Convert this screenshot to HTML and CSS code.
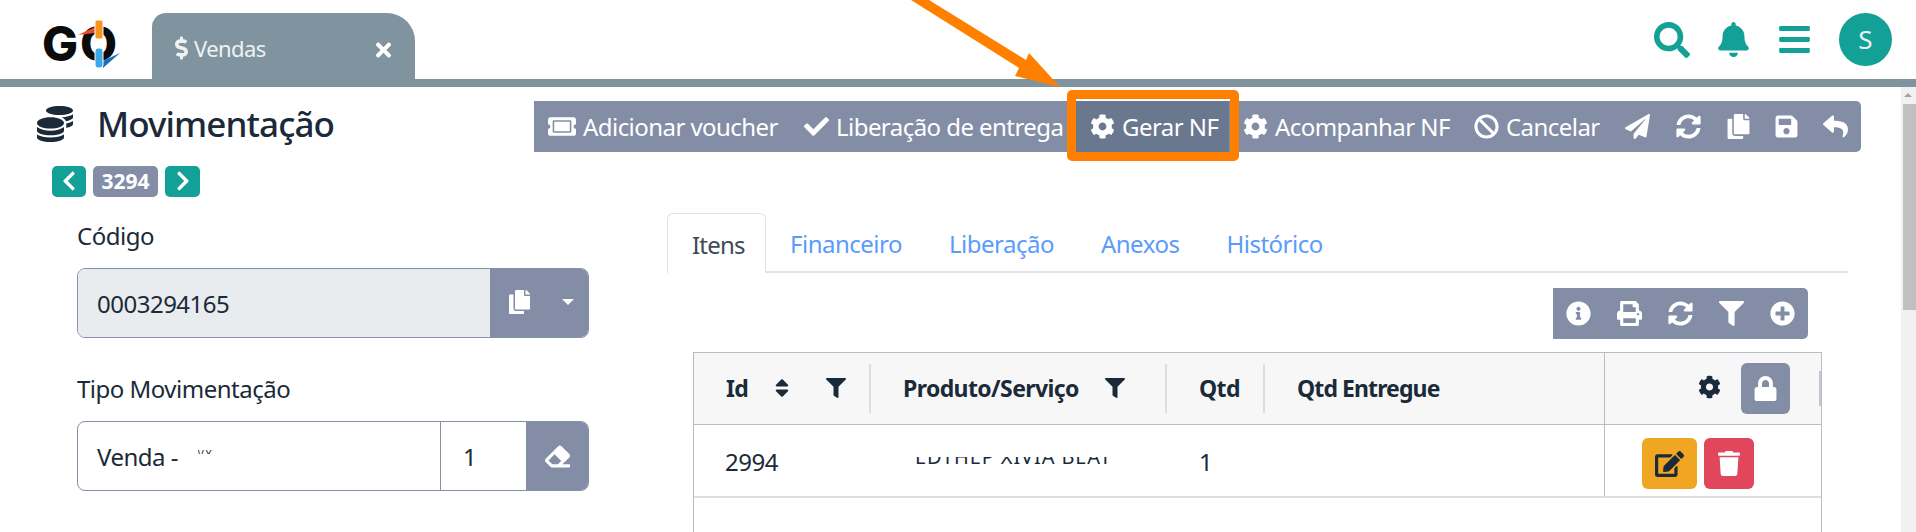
FILE: index.html
```html
<!DOCTYPE html>
<html lang="pt-BR">
<head>
    <meta charset="UTF-8">
    <title>Movimentação</title>
    <link rel="stylesheet" href="styles.css">
</head>
<body>

    <!-- Icon set -->
    <svg class="icon-defs" xmlns="http://www.w3.org/2000/svg">
        <symbol id="i-search" viewBox="0 0 512 512"><path d="M505 442.7L405.3 343c-4.5-4.5-10.6-7-17-7H372c27.6-35.3 44-79.7 44-128C416 93.1 322.9 0 208 0S0 93.1 0 208s93.1 208 208 208c48.3 0 92.7-16.4 128-44v16.3c0 6.4 2.5 12.5 7 17l99.7 99.7c9.4 9.4 24.6 9.4 33.9 0l28.3-28.3c9.4-9.4 9.4-24.6.1-34zM208 336c-70.7 0-128-57.2-128-128 0-70.7 57.2-128 128-128 70.7 0 128 57.2 128 128 0 70.7-57.2 128-128 128z"/></symbol>
        <symbol id="i-bell" viewBox="0 0 448 512"><path d="M224 512c35.32 0 63.97-28.65 63.97-64H160.03c0 35.35 28.65 64 63.97 64zm215.39-149.71c-19.32-20.76-55.47-51.99-55.47-154.29 0-77.7-54.48-139.9-127.94-155.16V32c0-17.67-14.32-32-31.98-32s-31.98 14.33-31.98 32v20.84C118.56 68.1 64.08 130.3 64.08 208c0 102.3-36.15 133.53-55.47 154.29-6 6.45-8.66 14.16-8.61 21.71.11 16.4 12.98 32 32.1 32h383.8c19.12 0 32-15.6 32.1-32 .05-7.55-2.61-15.27-8.61-21.71z"/></symbol>
        <symbol id="i-bars" viewBox="0 0 448 512"><path d="M16 132h416c8.837 0 16-7.163 16-16V76c0-8.837-7.163-16-16-16H16C7.163 60 0 67.163 0 76v40c0 8.837 7.163 16 16 16zm0 160h416c8.837 0 16-7.163 16-16v-40c0-8.837-7.163-16-16-16H16c-8.837 0-16 7.163-16 16v40c0 8.837 7.163 16 16 16zm0 160h416c8.837 0 16-7.163 16-16v-40c0-8.837-7.163-16-16-16H16c-8.837 0-16 7.163-16 16v40c0 8.837 7.163 16 16 16z"/></symbol>
        <symbol id="i-cog" viewBox="0 0 512 512"><path d="M487.4 315.7l-42.6-24.6c4.3-23.2 4.3-47 0-70.2l42.6-24.6c4.9-2.8 7.1-8.6 5.5-14-11.1-35.6-30-67.8-54.7-94.6-3.8-4.1-10-5.1-14.8-2.3L380.8 110c-17.9-15.4-38.5-27.3-60.8-35.1V25.8c0-5.6-3.9-10.5-9.4-11.7-36.7-8.2-74.3-7.8-109.2 0-5.5 1.2-9.4 6.1-9.4 11.7V75c-22.2 7.9-42.8 19.8-60.8 35.1L88.7 85.5c-4.9-2.8-11-1.9-14.8 2.3-24.7 26.7-43.6 58.9-54.7 94.6-1.7 5.4.6 11.2 5.5 14L67.3 221c-4.3 23.2-4.3 47 0 70.2l-42.6 24.6c-4.9 2.8-7.1 8.6-5.5 14 11.1 35.6 30 67.8 54.7 94.6 3.8 4.1 10 5.1 14.8 2.3l42.6-24.6c17.9 15.4 38.5 27.3 60.8 35.1v49.2c0 5.6 3.9 10.5 9.4 11.7 36.7 8.2 74.3 7.8 109.2 0 5.5-1.2 9.4-6.1 9.4-11.7v-49.2c22.2-7.9 42.8-19.8 60.8-35.1l42.6 24.6c4.9 2.8 11 1.9 14.8-2.3 24.7-26.7 43.6-58.9 54.7-94.6 1.5-5.5-.7-11.3-5.6-14.1zM256 336c-44.1 0-80-35.9-80-80s35.9-80 80-80 80 35.9 80 80-35.9 80-80 80z"/></symbol>
        <symbol id="i-check" viewBox="0 0 512 512"><path d="M173.898 439.404l-166.4-166.4c-9.997-9.997-9.997-26.206 0-36.204l36.203-36.204c9.997-9.998 26.207-9.998 36.204 0L192 312.69 432.095 72.596c9.997-9.997 26.207-9.997 36.204 0l36.203 36.204c9.997 9.997 9.997 26.206 0 36.204l-294.4 294.401c-9.998 9.997-26.207 9.997-36.204-.001z"/></symbol>
        <symbol id="i-ban" viewBox="0 0 512 512"><path d="M256 8C119.034 8 8 119.033 8 256s111.034 248 248 248 248-111.034 248-248S392.967 8 256 8zm130.108 117.892c65.448 65.448 70 165.481 20.677 235.637L150.47 105.216c70.204-49.356 170.226-44.735 235.638 20.676zM125.892 386.108c-65.448-65.448-70-165.481-20.677-235.637L361.53 406.784c-70.203 49.356-170.226 44.736-235.638-20.676z"/></symbol>
        <symbol id="i-plane" viewBox="0 0 512 512"><path d="M476 3.2L12.5 270.6c-18.1 10.4-15.8 35.6 2.2 43.2L121 358.4l287.3-253.2c5.5-4.9 13.3 2.6 8.6 8.3L176 407v80.5c0 23.6 28.5 32.9 42.5 15.8L282 426l124.6 52.2c14.2 6 30.4-2.9 33-18.2l72-432C515 7.8 493.3-6.8 476 3.2z"/></symbol>
        <symbol id="i-sync" viewBox="0 0 512 512"><path d="M370.72 133.28C339.458 104.008 298.888 87.962 255.848 88c-77.458.068-144.328 53.178-162.791 126.85-1.344 5.363-6.122 9.15-11.651 9.15H24.103c-7.498 0-13.194-6.807-11.807-14.176C33.933 94.924 134.813 8 256 8c66.448 0 126.791 26.136 171.315 68.685L463.03 40.97C478.149 25.851 504 36.559 504 57.941V192c0 13.255-10.745 24-24 24H345.941c-21.382 0-32.09-25.851-16.971-40.971l41.75-41.749zM32 296h134.059c21.382 0 32.09 25.851 16.971 40.971l-41.75 41.75c31.262 29.273 71.835 45.319 114.876 45.28 77.418-.07 144.315-53.144 162.787-126.849 1.344-5.363 6.122-9.15 11.651-9.15h57.304c7.498 0 13.194 6.807 11.807 14.176C478.067 417.076 377.187 504 256 504c-66.448 0-126.791-26.136-171.315-68.685L48.97 471.03C33.851 486.149 8 475.441 8 454.059V320c0-13.255 10.745-24 24-24z"/></symbol>
        <symbol id="i-copy" viewBox="0 0 448 512"><path d="M320 448v40c0 13.255-10.745 24-24 24H24c-13.255 0-24-10.745-24-24V120c0-13.255 10.745-24 24-24h72v296c0 30.879 25.121 56 56 56h168zm0-344V0H152c-13.255 0-24 10.745-24 24v368c0 13.255 10.745 24 24 24h272c13.255 0 24-10.745 24-24V128H344c-13.2 0-24-10.8-24-24zm120.971-31.029L375.029 7.029A24 24 0 0 0 358.059 0H352v96h96v-6.059a24 24 0 0 0-7.029-16.97z"/></symbol>
        <symbol id="i-save" viewBox="0 0 448 512"><path d="M433.941 129.941l-83.882-83.882A48 48 0 0 0 316.118 32H48C21.49 32 0 53.49 0 80v352c0 26.51 21.49 48 48 48h352c26.51 0 48-21.49 48-48V163.882a48 48 0 0 0-14.059-33.941zM224 416c-35.346 0-64-28.654-64-64 0-35.346 28.654-64 64-64s64 28.654 64 64c0 35.346-28.654 64-64 64zm96-304.52V212c0 6.627-5.373 12-12 12H76c-6.627 0-12-5.373-12-12V108c0-6.627 5.373-12 12-12h228.52c3.183 0 6.235 1.264 8.485 3.515l3.48 3.48A11.996 11.996 0 0 1 320 111.48z"/></symbol>
        <symbol id="i-reply" viewBox="0 0 512 512"><path d="M8.309 189.836L184.313 37.851C199.719 24.546 224 35.347 224 56.015v80.053c160.629 1.839 288 34.032 288 186.258 0 61.441-39.581 122.309-83.333 154.132-13.653 9.931-33.111-2.533-28.077-18.631 45.344-145.012-21.507-183.51-176.59-185.742V360c0 20.7-24.3 31.453-39.687 18.164l-176.004-152c-11.071-9.562-11.086-26.753 0-36.328z"/></symbol>
        <symbol id="i-ticket" viewBox="0 0 576 512"><path d="M128 160h320v192H128V160zm400 96c0 26.51 21.49 48 48 48v96c0 26.51-21.49 48-48 48H48c-26.51 0-48-21.49-48-48v-96c26.51 0 48-21.49 48-48s-21.49-48-48-48v-96c0-26.51 21.49-48 48-48h480c26.51 0 48 21.49 48 48v96c-26.51 0-48 21.49-48 48zm-48-104c0-13.255-10.745-24-24-24H120c-13.255 0-24 10.745-24 24v208c0 13.255 10.745 24 24 24h336c13.255 0 24-10.745 24-24V152z"/></symbol>
        <symbol id="i-coins" viewBox="0 0 512 512"><path d="M0 405.3V448c0 35.3 86 64 192 64s192-28.7 192-64v-42.7C342.7 434.4 267.2 448 192 448S41.3 434.4 0 405.3zM320 128c106 0 192-28.7 192-64S426 0 320 0 128 28.7 128 64s86 64 192 64zM0 300.4V352c0 35.3 86 64 192 64s192-28.7 192-64v-51.6c-41.3 34-116.9 51.6-192 51.6S41.3 334.4 0 300.4zm416 11c57.3-11.1 96-31.7 96-55.4v-42.7c-23.2 16.4-57.3 27.6-96 34.5v63.6zM192 160C86 160 0 195.8 0 240s86 80 192 80 192-35.8 192-80-86-80-192-80zm219.3 56.3c60-10.8 100.7-32 100.7-56.3v-42.7c-35.5 25.1-96.5 38.6-160.7 41.8 29.5 14.3 51.2 33.5 60 57.2z"/></symbol>
        <symbol id="i-dollar" viewBox="0 0 288 512"><path d="M209.2 233.4l-108-31.6C88.7 198.2 80 186.5 80 173.5c0-16.3 13.2-29.5 29.5-29.5h66.3c12.2 0 24.2 3.7 34.2 10.5 6.1 4.1 14.3 3.1 19.5-2l34.8-34c7.1-6.9 6.1-18.4-1.8-24.5C238 74.8 207.4 64.1 176 64V16c0-8.8-7.2-16-16-16h-32c-8.8 0-16 7.2-16 16v48h-2.5C45.8 64-5.4 118.7.5 183.6c4.2 46.1 39.4 83.6 83.8 96.6l102.5 30c12.5 3.7 21.2 15.3 21.2 28.3 0 16.3-13.2 29.5-29.5 29.5h-66.3C100 368 88 364.3 78 357.5c-6.1-4.1-14.3-3.1-19.5 2l-34.8 34c-7.1 6.9-6.1 18.4 1.8 24.5 24.5 19.2 55.1 29.9 86.5 30v48c0 8.8 7.2 16 16 16h32c8.8 0 16-7.2 16-16v-48.2c46.6-.9 90.3-28.6 105.7-72.7 21.5-61.6-14.6-124.8-72.5-141.7z"/></symbol>
        <symbol id="i-times" viewBox="0 0 352 512"><path d="M242.72 256l100.07-100.07c12.28-12.28 12.28-32.19 0-44.48l-22.24-22.24c-12.28-12.28-32.19-12.28-44.48 0L176 189.28 75.93 89.21c-12.28-12.28-32.19-12.28-44.48 0L9.21 111.45c-12.28 12.28-12.28 32.19 0 44.48L109.28 256 9.21 356.07c-12.28 12.28-12.28 32.19 0 44.48l22.24 22.24c12.28 12.28 32.2 12.28 44.48 0L176 322.72l100.07 100.07c12.28 12.28 32.2 12.28 44.48 0l22.24-22.24c12.28-12.28 12.28-32.19 0-44.48L242.72 256z"/></symbol>
        <symbol id="i-left" viewBox="0 0 320 512"><path d="M34.52 239.03L228.87 44.69c9.37-9.37 24.57-9.37 33.94 0l22.67 22.67c9.36 9.36 9.37 24.52.04 33.9L131.49 256l154.02 154.75c9.34 9.38 9.32 24.54-.04 33.9l-22.67 22.67c-9.37 9.37-24.57 9.37-33.94 0L34.52 272.97c-9.37-9.37-9.37-24.57 0-33.94z"/></symbol>
        <symbol id="i-right" viewBox="0 0 320 512"><path d="M285.476 272.971L91.132 467.314c-9.373 9.373-24.569 9.373-33.941 0l-22.667-22.667c-9.357-9.357-9.375-24.522-.04-33.901L188.505 256 34.484 101.255c-9.335-9.379-9.317-24.544.04-33.901l22.667-22.667c9.373-9.373 24.569-9.373 33.941 0L285.475 239.03c9.373 9.372 9.373 24.568.001 33.941z"/></symbol>
        <symbol id="i-eraser" viewBox="0 0 512 512"><path d="M497.941 273.941c18.745-18.745 18.745-49.137 0-67.882l-160-160c-18.745-18.745-49.138-18.745-67.882 0l-256 256c-18.745 18.745-18.745 49.137 0 67.882l96 96A48.004 48.004 0 0 0 144 480h356c6.627 0 12-5.373 12-12v-40c0-6.627-5.373-12-12-12H355.883l142.058-142.059zm-302.627-62.627l137.373 137.373L265.373 416H150.628l-80-80 124.686-124.686z"/></symbol>
        <symbol id="i-info" viewBox="0 0 512 512"><path d="M256 8C119.043 8 8 119.083 8 256c0 136.997 111.043 248 248 248s248-111.003 248-248C504 119.083 392.957 8 256 8zm0 110c23.196 0 42 18.804 42 42s-18.804 42-42 42-42-18.804-42-42 18.804-42 42-42zm56 254c0 6.627-5.373 12-12 12h-88c-6.627 0-12-5.373-12-12v-24c0-6.627 5.373-12 12-12h12v-64h-12c-6.627 0-12-5.373-12-12v-24c0-6.627 5.373-12 12-12h64c6.627 0 12 5.373 12 12v100h12c6.627 0 12 5.373 12 12v24z"/></symbol>
        <symbol id="i-print" viewBox="0 0 512 512"><path d="M448 192V77.25c0-8.49-3.37-16.62-9.37-22.63L393.37 9.37c-6-6-14.14-9.37-22.63-9.37H96C78.33 0 64 14.33 64 32v160c-35.35 0-64 28.65-64 64v112c0 8.84 7.16 16 16 16h48v96c0 17.67 14.33 32 32 32h320c17.67 0 32-14.33 32-32v-96h48c8.84 0 16-7.16 16-16V256c0-35.35-28.65-64-64-64zm-64 256H128v-96h256v96zm0-224H128V64h192v48c0 8.84 7.16 16 16 16h48v96zm48 72c-13.25 0-24-10.75-24-24 0-13.26 10.75-24 24-24s24 10.74 24 24c0 13.25-10.75 24-24 24z"/></symbol>
        <symbol id="i-filter" viewBox="0 0 512 512"><path d="M487.976 0H24.028C2.71 0-8.047 25.866 7.058 40.971L192 225.941V432c0 7.831 3.821 15.17 10.237 19.662l80 55.98C298.02 518.69 320 507.493 320 487.98V225.941l184.947-184.97C520.021 25.896 509.338 0 487.976 0z"/></symbol>
        <symbol id="i-plus" viewBox="0 0 512 512"><path d="M256 8C119 8 8 119 8 256s111 248 248 248 248-111 248-248S393 8 256 8zm144 276c0 6.6-5.4 12-12 12h-92v92c0 6.6-5.4 12-12 12h-56c-6.6 0-12-5.4-12-12v-92h-92c-6.6 0-12-5.4-12-12v-56c0-6.6 5.4-12 12-12h92v-92c0-6.6 5.4-12 12-12h56c6.6 0 12 5.4 12 12v92h92c6.6 0 12 5.4 12 12v56z"/></symbol>
        <symbol id="i-lock" viewBox="0 0 448 512"><path d="M400 224h-24v-72C376 68.2 307.8 0 224 0S72 68.2 72 152v72H48c-26.5 0-48 21.5-48 48v192c0 26.5 21.5 48 48 48h352c26.5 0 48-21.5 48-48V272c0-26.5-21.5-48-48-48zm-104 0H152v-72c0-39.7 32.3-72 72-72s72 32.3 72 72v72z"/></symbol>
        <symbol id="i-edit" viewBox="0 0 576 512"><path d="M402.6 83.2l90.2 90.2c3.8 3.8 3.8 10 0 13.8L274.4 405.6l-92.8 10.3c-12.4 1.4-22.9-9.1-21.5-21.5l10.3-92.8L388.8 83.2c3.8-3.8 10-3.8 13.8 0zm162-22.9l-48.8-48.8c-15.2-15.2-39.9-15.2-55.2 0l-35.4 35.4c-3.8 3.8-3.8 10 0 13.8l90.2 90.2c3.8 3.8 10 3.8 13.8 0l35.4-35.4c15.2-15.3 15.2-40 0-55.2zM384 346.2V448H64V128h229.8c3.2 0 6.2-1.3 8.5-3.5l40-40c7.6-7.6 2.2-20.5-8.5-20.5H48C21.5 64 0 85.5 0 112v352c0 26.5 21.5 48 48 48h352c26.5 0 48-21.5 48-48V306.2c0-10.7-12.9-16-20.5-8.5l-40 40c-2.2 2.3-3.5 5.3-3.5 8.5z"/></symbol>
        <symbol id="i-trash" viewBox="0 0 448 512"><path d="M432 32H312l-9.4-18.7A24 24 0 0 0 281.1 0H166.8a23.72 23.72 0 0 0-21.4 13.3L136 32H16A16 16 0 0 0 0 48v32a16 16 0 0 0 16 16h416a16 16 0 0 0 16-16V48a16 16 0 0 0-16-16zM53.2 467a48 48 0 0 0 47.9 45h245.8a48 48 0 0 0 47.9-45L416 128H32z"/></symbol>
        <symbol id="i-sort" viewBox="0 0 320 512"><path d="M41 288h238c21.4 0 32.1 25.9 17 41L177 448c-9.4 9.4-24.6 9.4-33.9 0L24 329c-15.1-15.1-4.4-41 17-41zm255-105L177 64c-9.4-9.4-24.6-9.4-33.9 0L24 183c-15.1 15.1-4.4 41 17 41h238c21.4 0 32.1-25.9 17-41z"/></symbol>
    </svg>

    <!-- Top bar -->
    <header class="topbar">
        <div class="logo">
            <span class="logo-text">GO</span>
            <svg class="logo-mark" viewBox="0 0 80 50">
                <path d="M35 15L52 7V13z" fill="#e8492c"/>
                <rect x="52" y="0" width="8" height="19" rx="2" fill="#f7941d" stroke="#fff" stroke-width="1"/>
                <path d="M60 41L77 33L60 48z" fill="#1b6fb5"/>
                <rect x="52" y="28" width="8" height="20" rx="3" fill="#3fa9e6" stroke="#fff" stroke-width="1"/>
            </svg>
        </div>
        <div class="app-tab">
            <span class="app-tab-title"><svg class="ic ic-dollar"><use href="#i-dollar"/></svg>Vendas</span>
            <svg class="ic ic-close"><use href="#i-times"/></svg>
        </div>
        <div class="top-actions">
            <svg class="ic ic-search"><use href="#i-search"/></svg>
            <svg class="ic ic-bell"><use href="#i-bell"/></svg>
            <svg class="ic ic-bars"><use href="#i-bars"/></svg>
            <div class="avatar">S</div>
        </div>
    </header>

    <div class="workspace">
        <main class="content">
            <div class="title-row">
                <div class="title">
                    <svg class="ic ic-coins"><use href="#i-coins"/></svg>
                    <h1>Movimentação</h1>
                </div>
                <div class="toolbar">
                    <button class="tb-btn tb-voucher"><svg class="ic ic-ticket"><use href="#i-ticket"/></svg>Adicionar voucher</button>
                    <button class="tb-btn tb-release"><svg class="ic"><use href="#i-check"/></svg>Liberação de entrega</button>
                    <button class="tb-btn tb-active"><svg class="ic"><use href="#i-cog"/></svg>Gerar NF</button>
                    <button class="tb-btn tb-follow"><svg class="ic"><use href="#i-cog"/></svg>Acompanhar NF</button>
                    <button class="tb-btn tb-cancel"><svg class="ic"><use href="#i-ban"/></svg>Cancelar</button>
                    <button class="tb-btn"><svg class="ic"><use href="#i-plane"/></svg></button>
                    <button class="tb-btn"><svg class="ic"><use href="#i-sync"/></svg></button>
                    <button class="tb-btn tb-narrow"><svg class="ic"><use href="#i-copy"/></svg></button>
                    <button class="tb-btn tb-narrow"><svg class="ic"><use href="#i-save"/></svg></button>
                    <button class="tb-btn"><svg class="ic"><use href="#i-reply"/></svg></button>
                </div>
            </div>

            <div class="pager">
                <button class="pager-btn"><svg class="ic"><use href="#i-left"/></svg></button>
                <span class="pager-num">3294</span>
                <button class="pager-btn pager-next"><svg class="ic"><use href="#i-right"/></svg></button>
            </div>

            <div class="columns">
                <!-- Form -->
                <section class="form">
                    <label class="field-label">Código</label>
                    <div class="input-group">
                        <div class="input-cell input-code">0003294165</div>
                        <div class="addon addon-code">
                            <svg class="ic"><use href="#i-copy"/></svg>
                            <span class="caret"></span>
                        </div>
                    </div>
                    <label class="field-label field-second">Tipo Movimentação</label>
                    <div class="input-group">
                        <div class="input-cell input-type">Venda - <span class="masked"><span>VY</span></span></div>
                        <div class="input-cell input-num">1</div>
                        <div class="addon addon-erase"><svg class="ic"><use href="#i-eraser"/></svg></div>
                    </div>
                </section>

                <!-- Tabs and items -->
                <section class="detail">
                    <nav class="tabs">
                        <a class="tab tab-active">Itens</a>
                        <a class="tab">Financeiro</a>
                        <a class="tab">Liberação</a>
                        <a class="tab">Anexos</a>
                        <a class="tab">Histórico</a>
                    </nav>

                    <div class="mini-row">
                        <div class="toolbar mini-toolbar">
                            <button class="tb-btn"><svg class="ic"><use href="#i-info"/></svg></button>
                            <button class="tb-btn"><svg class="ic"><use href="#i-print"/></svg></button>
                            <button class="tb-btn"><svg class="ic"><use href="#i-sync"/></svg></button>
                            <button class="tb-btn"><svg class="ic"><use href="#i-filter"/></svg></button>
                            <button class="tb-btn"><svg class="ic"><use href="#i-plus"/></svg></button>
                        </div>
                    </div>

                    <div class="table-wrap">
                        <table class="items">
                            <colgroup>
                                <col class="col-id"><col class="col-prod"><col class="col-qtd"><col class="col-ent"><col class="col-act">
                            </colgroup>
                            <thead>
                                <tr>
                                    <th><div class="th-in">Id
                                        <svg class="ic ic-sort"><use href="#i-sort"/></svg>
                                        <svg class="ic ic-funnel ic-funnel-id"><use href="#i-filter"/></svg>
                                    </div></th>
                                    <th><div class="th-in">Produto/Serviço
                                        <svg class="ic ic-funnel ic-funnel-prod"><use href="#i-filter"/></svg>
                                    </div></th>
                                    <th><div class="th-in">Qtd</div></th>
                                    <th><div class="th-in th-last">Qtd Entregue</div></th>
                                    <th class="th-actions">
                                        <svg class="ic ic-gear"><use href="#i-cog"/></svg>
                                        <button class="lock-btn"><svg class="ic"><use href="#i-lock"/></svg></button>
                                        <span class="th-grip"></span>
                                    </th>
                                </tr>
                            </thead>
                            <tbody>
                                <tr>
                                    <td class="td-id">2994</td>
                                    <td class="td-prod"><span class="masked-prod"><span>EDTHEP XIVIA BEAT</span></span></td>
                                    <td class="td-qtd">1</td>
                                    <td></td>
                                    <td class="td-actions">
                                        <div class="row-actions">
                                            <button class="act-btn act-edit"><svg class="ic"><use href="#i-edit"/></svg></button>
                                            <button class="act-btn act-del"><svg class="ic"><use href="#i-trash"/></svg></button>
                                        </div>
                                    </td>
                                </tr>
                            </tbody>
                        </table>
                    </div>
                </section>
            </div>
        </main>

        <div class="scrollbar">
            <div class="scroll-up"></div>
            <div class="scroll-thumb"></div>
        </div>
    </div>

    <!-- Annotation drawn over the page -->
    <div class="note-box"></div>
    <svg class="note-arrow" viewBox="0 0 1916 532">
        <path d="M911 0H929L1026 60L1029 53L1060 87L1015 76L1019 68z" fill="#ff8000"/>
    </svg>

</body>
</html>
```

FILE: styles.css
```css
* {
    box-sizing: border-box;
}

html, body {
    height: 100%;
}

body {
    margin: 0;
    overflow: hidden;
    position: relative;
    display: flex;
    flex-direction: column;
    background-color: #fff;
    color: #1b2a38;
    font-family: "Noto Sans", "Open Sans", sans-serif;
    font-size: 24px;
}

button {
    border: 0;
    font-family: inherit;
    color: #fff;
    background: none;
    padding: 0;
}

.icon-defs {
    display: none;
}

.ic {
    display: block;
    width: 25px;
    height: 25px;
    fill: currentColor;
    flex: none;
}

/* Top bar */
.topbar {
    display: flex;
    align-items: stretch;
    height: 87px;
    border-bottom: 8px solid #7f949e;
    flex: none;
}

.logo {
    position: relative;
    width: 152px;
    padding: 19px 0 0 42px;
}

.logo-text {
    display: block;
    color: #0b0b0b;
    font-family: "Inter", "Liberation Sans", sans-serif;
    font-weight: 800;
    font-size: 48px;
    line-height: 50px;
    letter-spacing: 2px;
}

.logo-mark {
    position: absolute;
    left: 43px;
    top: 20px;
    width: 80px;
    height: 50px;
}

.app-tab {
    display: flex;
    align-items: center;
    justify-content: space-between;
    width: 263px;
    margin-top: 13px;
    padding: 4px 23px 0;
    background-color: #7f949e;
    border-radius: 14px 28px 0 0;
    color: #eef2f3;
    font-size: 22px;
}

.app-tab-title {
    display: flex;
    align-items: center;
    gap: 6px;
    letter-spacing: -0.6px;
}

.ic-dollar {
    width: 13px;
    height: 24px;
}

.ic-close {
    width: 17px;
    height: 22px;
    color: #fff;
    margin-top: 4px;
}

.top-actions {
    display: flex;
    align-items: center;
    margin-left: auto;
    padding-right: 24px;
    color: #13a096;
}

.ic-search {
    width: 36px;
    height: 36px;
    margin-right: 28px;
}

.ic-bell {
    width: 31px;
    height: 35px;
    margin-right: 30px;
}

.ic-bars {
    width: 31px;
    height: 35px;
    margin-right: 29px;
}

.avatar {
    width: 53px;
    height: 53px;
    border-radius: 50%;
    background-color: #13a096;
    color: #e8f1f0;
    font-size: 26px;
    line-height: 53px;
    text-align: center;
}

/* Main area */
.workspace {
    display: flex;
    flex: 1;
    min-height: 0;
}

.content {
    flex: 1;
    min-width: 0;
}

.scrollbar {
    width: 15px;
    flex: none;
    background-color: #f1f1f1;
}

.scroll-up {
    height: 17px;
    position: relative;
}

.scroll-up::after {
    content: "";
    position: absolute;
    left: 3px;
    top: 6px;
    border-left: 4px solid transparent;
    border-right: 4px solid transparent;
    border-bottom: 4px solid #a3a3a3;
}

.scroll-thumb {
    height: 206px;
    margin-left: 2px;
    background-color: #c0c0c0;
}

.title-row {
    display: flex;
    justify-content: space-between;
    align-items: center;
    padding: 14px 40px 0 37px;
}

.title {
    display: flex;
    align-items: center;
    gap: 24px;
    margin-top: -6px;
}

.ic-coins {
    width: 36px;
    height: 36px;
}

h1 {
    margin: 0;
    font-size: 35px;
    font-weight: 500;
    letter-spacing: -0.9px;
    line-height: 44px;
}

/* Action bars */
.toolbar {
    display: flex;
    height: 51px;
    background-color: #838ea6;
    border-radius: 0 5px 5px 0;
}

.tb-btn {
    display: flex;
    align-items: center;
    gap: 7px;
    height: 51px;
    padding: 0 13px;
    font-size: 24px;
    letter-spacing: -0.55px;
    white-space: nowrap;
}

.tb-voucher {
    padding-left: 14px;
    width: 256px;
}

.ic-ticket {
    width: 28px;
}

.tb-release {
    width: 286px;
    padding-left: 14px;
}

.tb-active {
    width: 153px;
    padding-left: 14px;
    background-color: #69778f;
}

.tb-follow {
    width: 232px;
    padding-left: 14px;
}

.tb-cancel {
    width: 151px;
}

.tb-narrow {
    padding: 0 11.5px;
}

/* Record pager */
.pager {
    display: flex;
    align-items: center;
    gap: 7px;
    margin: 13px 0 16px 52px;
    height: 32px;
}

.pager-btn {
    display: flex;
    align-items: center;
    justify-content: center;
    width: 34px;
    height: 31px;
    border-radius: 5px;
    background-color: #13a096;
}

.pager-next {
    width: 35px;
}

.pager-btn .ic {
    width: 14px;
    height: 22px;
}

.pager-num {
    width: 65px;
    height: 31px;
    border-radius: 5px;
    background-color: #838ea6;
    color: #fff;
    font-size: 21px;
    font-weight: 700;
    line-height: 30px;
    text-align: center;
}

.columns {
    display: flex;
    align-items: flex-start;
    padding-left: 77px;
}

/* Form */
.form {
    width: 512px;
    flex: none;
    padding-top: 6px;
}

.field-label {
    display: block;
    height: 49px;
    font-size: 24px;
    line-height: 34px;
    letter-spacing: -0.5px;
}

.field-second {
    margin-top: 34px;
}

.input-group {
    display: flex;
    height: 70px;
    border: 1px solid #8791a8;
    border-radius: 8px;
    overflow: hidden;
}

.input-cell {
    display: flex;
    align-items: center;
    padding-left: 19px;
    letter-spacing: -0.5px;
}

.input-code {
    flex: 1;
    background-color: #e9ecef;
}

.input-type {
    width: 362px;
    white-space: pre;
}

.input-num {
    width: 86px;
    padding-left: 22px;
    border-left: 1px solid #8791a8;
}

.addon {
    display: flex;
    align-items: center;
    background-color: #838ea6;
    color: #fff;
}

.addon-code {
    width: 98px;
    padding-left: 19px;
}

.addon-code .ic {
    width: 21px;
    height: 24px;
    margin-top: -3px;
}

.caret {
    margin-left: 32px;
    margin-top: -3px;
    border-left: 6px solid transparent;
    border-right: 6px solid transparent;
    border-top: 6px solid #fff;
}

.addon-erase {
    flex: 1;
    justify-content: center;
}

.masked {
    display: block;
    height: 4px;
    overflow: hidden;
    margin: -9px 0 0 14px;
    font-size: 10px;
    letter-spacing: 2px;
}

.masked span {
    display: block;
    line-height: 12px;
    margin-top: -2px;
}

/* Tabs and items */
.detail {
    width: 1181px;
    margin-left: 78px;
    flex: none;
}

.tabs {
    display: flex;
    height: 60px;
    border-bottom: 2px solid #e0e3e8;
}

.tab {
    padding: 14px 23.5px 0;
    color: #5b9bfb;
    font-size: 24px;
    line-height: 34px;
    letter-spacing: -0.5px;
}

.tab-active {
    width: 99px;
    height: 60px;
    padding: 14px 0 0 24px;
    margin-right: 0.5px;
    color: #3e4a56;
    background-color: #fff;
    border: 1px solid #e0e3e8;
    border-bottom: 0;
    border-radius: 6px 6px 0 0;
    letter-spacing: -0.8px;
}

.mini-row {
    display: flex;
    justify-content: flex-end;
    padding: 15px 40px 13px 0;
}

.table-wrap {
    width: 1129px;
    height: 200px;
    margin-left: 26px;
    border: 1px solid #b8bcc8;
    border-bottom: 0;
}

.items {
    width: 100%;
    table-layout: fixed;
    border-collapse: collapse;
}

.col-id { width: 177px; }
.col-prod { width: 296px; }
.col-qtd { width: 98px; }
.col-ent { width: 339px; }
.col-act { width: 217px; }

th {
    height: 71px;
    padding: 0;
    background-color: #f7f7f8;
    border-bottom: 1px solid #b8bcc8;
    font-size: 23px;
    text-align: left;
    letter-spacing: -0.6px;
}

.th-in {
    display: flex;
    align-items: center;
    height: 49px;
    padding-left: 32px;
    border-right: 2px solid #dcdde3;
}

.th-last {
    border-right: 0;
    letter-spacing: -0.9px;
}

.ic-sort {
    width: 14px;
    height: 24px;
    margin-left: 27px;
}

.ic-funnel {
    width: 20px;
    height: 20px;
    margin-top: -1px;
}

.ic-funnel-id {
    margin-left: 37px;
}

.ic-funnel-prod {
    margin-left: 26px;
}

.th-actions {
    position: relative;
    padding-left: 93px;
    border-left: 1px solid #b8bcc8;
}

.th-actions .ic-gear {
    display: inline-block;
    width: 23px;
    height: 24px;
    vertical-align: middle;
    margin-top: -3px;
}

.lock-btn {
    display: inline-flex;
    align-items: center;
    justify-content: center;
    width: 49px;
    height: 51px;
    margin-left: 15px;
    border-radius: 6px;
    background-color: #838ea6;
    vertical-align: middle;
}

.lock-btn .ic {
    width: 23px;
    height: 25px;
}

.th-grip {
    position: absolute;
    right: 0;
    top: 18px;
    width: 2px;
    height: 35px;
    background-color: #c3c7d1;
}

td {
    height: 73px;
    padding: 0;
    border-bottom: 2px solid #dcdee6;
    letter-spacing: -0.5px;
}

.td-id {
    padding: 2px 0 0 31px;
}

.td-prod {
    padding-left: 44px;
}

.td-qtd {
    padding: 2px 0 0 32px;
}

.td-actions {
    padding-top: 7px;
    border-left: 1px solid #b8bcc8;
}

.masked-prod {
    display: block;
    height: 7px;
    overflow: hidden;
    margin-top: 1px;
    font-size: 20px;
    white-space: nowrap;
    letter-spacing: 0.9px;
}

.masked-prod span {
    display: block;
    line-height: 20px;
    margin-top: -10px;
}

.row-actions {
    display: flex;
    gap: 7px;
    padding-left: 37px;
}

.act-btn {
    display: flex;
    align-items: center;
    justify-content: center;
    height: 51px;
    border-radius: 6px;
}

.act-edit {
    width: 55px;
    background-color: #f0a622;
    color: #1b2a38;
}

.act-edit .ic {
    width: 29px;
    height: 26px;
}

.act-del {
    width: 50px;
    background-color: #e0465c;
}

.act-del .ic {
    width: 22px;
    height: 25px;
}

/* Annotation */
.note-box {
    position: absolute;
    left: 1067px;
    top: 90px;
    width: 172px;
    height: 71px;
    border: 9px solid #ff8000;
    border-radius: 5px;
}

.note-arrow {
    position: absolute;
    left: 0;
    top: 0;
    width: 1916px;
    height: 532px;
    pointer-events: none;
}
```
